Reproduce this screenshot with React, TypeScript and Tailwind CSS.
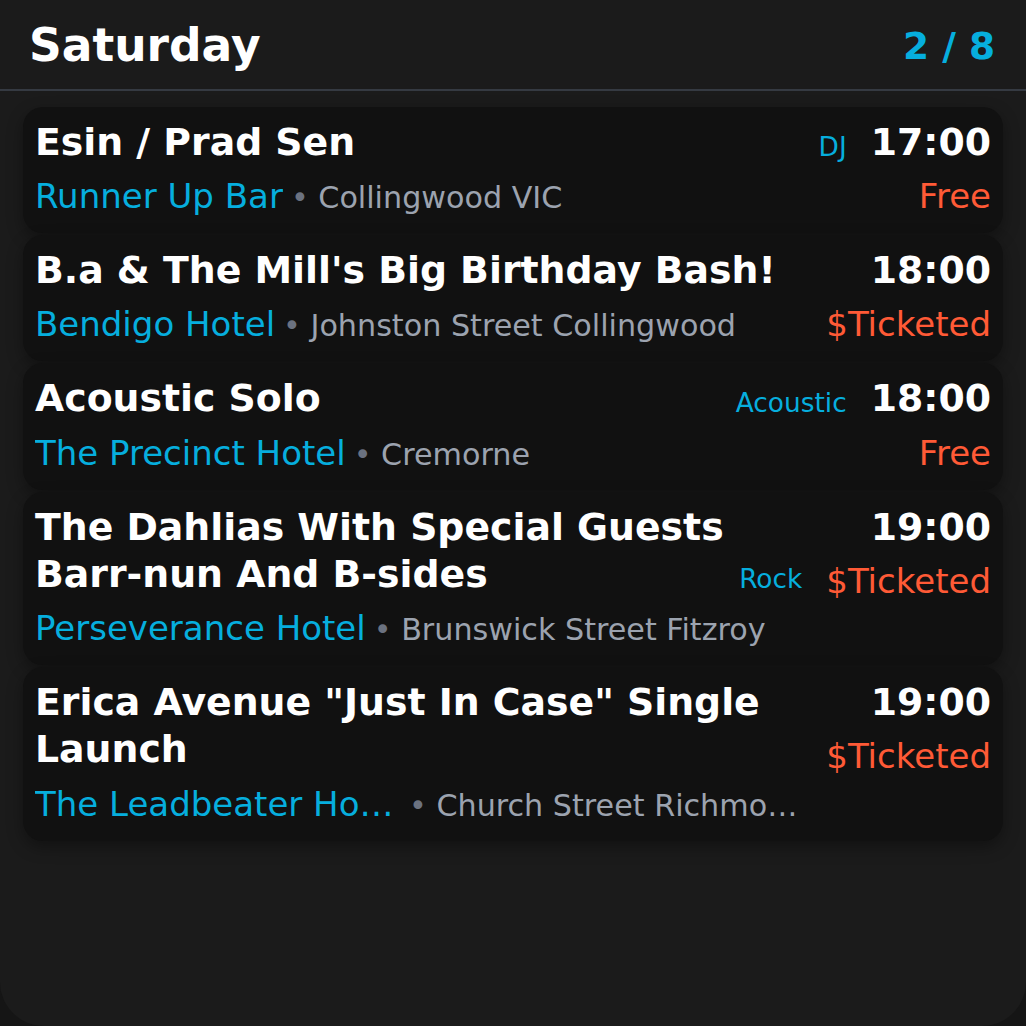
import React from 'react'

type Gig = {
  title: string
  genre?: string
  time: string
  price: string
  venue: string
  location: string
}

const gigs: Gig[] = [
  { title: 'Esin / Prad Sen', genre: 'DJ', time: '17:00', price: 'Free', venue: 'Runner Up Bar', location: 'Collingwood VIC' },
  { title: "B.a & The Mill's Big Birthday Bash!", time: '18:00', price: '$Ticketed', venue: 'Bendigo Hotel', location: 'Johnston Street Collingwood' },
  { title: 'Acoustic Solo', genre: 'Acoustic', time: '18:00', price: 'Free', venue: 'The Precinct Hotel', location: 'Cremorne' },
  { title: 'The Dahlias With Special Guests Barr-nun And B-sides', genre: 'Rock', time: '19:00', price: '$Ticketed', venue: 'Perseverance Hotel', location: 'Brunswick Street Fitzroy' },
  { title: 'Erica Avenue "Just In Case" Single Launch', time: '19:00', price: '$Ticketed', venue: 'The Leadbeater Hotel', location: 'Church Street Richmond' },
]

function GigCard({ gig }: { gig: Gig }) {
  return (
    <div className="flex gap-6 rounded-[20px] bg-[#111111] px-3 pb-[11px] pt-3 shadow-[0_6px_16px_rgba(0,0,0,0.35)]">
      {/* left: title + venue */}
      <div className="flex min-w-0 flex-1 flex-col">
        <div className="flex items-end gap-1">
          <h3 className="min-w-0 flex-1 text-[37.8px] font-bold leading-[1.25] text-white">{gig.title}</h3>
          {gig.genre && (
            <span className="shrink-0 text-[26.4px] leading-[1.5] text-[#06aede]">{gig.genre}</span>
          )}
        </div>
        <div className="mt-[5px] flex min-w-0 items-baseline text-[34px] leading-[1.5]">
          <span className="max-w-[366px] shrink-0 truncate text-[#06aede]">{gig.venue}</span>
          <span className="ml-2 min-w-0 truncate text-[30.2px] text-[#9ca3af]">
            <span className="text-[#6b7280]">•</span> {gig.location}
          </span>
        </div>
      </div>

      {/* right: time + price */}
      <div className="flex shrink-0 flex-col items-end">
        <span className="text-[37.8px] font-bold leading-[1.25] text-white">{gig.time}</span>
        <span className="mt-[5px] text-[34px] leading-[1.5] text-[#ff5a36]">{gig.price}</span>
      </div>
    </div>
  )
}

export default function App() {
  return (
    <div className="min-h-screen bg-[#151515]" style={{ fontFamily: '"DejaVu Sans", sans-serif' }}>
      <div className="flex h-[1026px] flex-col overflow-hidden rounded-b-[44px] bg-[#1b1b1b]">
        {/* Header */}
        <div className="flex h-[91px] shrink-0 items-center justify-between border-b-2 border-[#353a42] pl-[29px] pr-[31px] pt-1">
          <h1 className="text-[45.5px] font-bold text-white">Saturday</h1>
          <span className="text-[37.5px] font-bold text-[#06aede]">2 / 8</span>
        </div>

        {/* Gig list */}
        <div className="flex flex-col gap-[2px] px-[23px] pt-4">
          {gigs.map((gig) => (
            <GigCard key={gig.title} gig={gig} />
          ))}
        </div>
      </div>
    </div>
  )
}
